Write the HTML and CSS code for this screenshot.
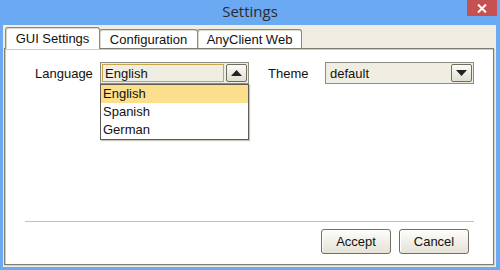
FILE: index.html
```html
<!DOCTYPE html>
<html lang="en">
<head>
  <meta charset="UTF-8" />
  <title>Settings</title>
  <link rel="stylesheet" href="styles.css">
</head>
<body>
  <div class="window">
    <div class="title-bar">
      <span class="title">Settings</span>
      <span class="close-btn">
        <svg width="10" height="9" viewBox="0 0 10 9">
          <path d="M1 0.5 L9 8.5 M9 0.5 L1 8.5" stroke="#fff" stroke-width="2" fill="none"/>
        </svg>
      </span>
    </div>

    <div class="client">
      <div class="tabs">
        <div class="tab active">GUI Settings</div>
        <div class="tab">Configuration</div>
        <div class="tab">AnyClient Web</div>
      </div>

      <div class="panel">
        <div class="form-row">
          <label class="field-label">Language</label>
          <div class="combo-wrap">
            <div class="combo">
              <div class="combo-text focused">English</div>
              <div class="combo-arrow">
                <svg width="11" height="6" viewBox="0 0 11 6"><path d="M0 6 L5.5 0 L11 6 Z" fill="#222"/></svg>
              </div>
            </div>
            <ul class="dropdown">
              <li class="selected">English</li>
              <li>Spanish</li>
              <li>German</li>
            </ul>
          </div>

          <label class="field-label theme-label">Theme</label>
          <div class="combo">
            <div class="combo-text">default</div>
            <div class="combo-arrow">
              <svg width="11" height="6" viewBox="0 0 11 6"><path d="M0 0 L5.5 6 L11 0 Z" fill="#222"/></svg>
            </div>
          </div>
        </div>

        <div class="spacer"></div>
        <hr class="separator">

        <div class="actions">
          <button class="btn">Accept</button>
          <button class="btn">Cancel</button>
        </div>
      </div>
    </div>
  </div>
</body>
</html>
```

FILE: styles.css
```css
body {
  margin: 0;
  font-family: "Liberation Sans", Arial, sans-serif;
  font-size: 13px;
  color: #111;
}

.window {
  width: 500px;
  height: 270px;
  background-color: #6ba9f2;
  display: flex;
  flex-direction: column;
}

.title-bar {
  height: 25px;
  position: relative;
  display: flex;
  justify-content: center;
  align-items: center;
}

.title {
  font-family: "Open Sans", "DejaVu Sans", sans-serif;
  font-size: 15px;
  color: #2b2b2b;
  margin-top: -3px;
}

.close-btn {
  position: absolute;
  top: 0;
  right: 3px;
  width: 30px;
  height: 16px;
  background-color: #c75050;
  display: flex;
  justify-content: center;
  align-items: center;
}

.client {
  flex: 1;
  margin: 0 4px 3px 3px;
  background-color: #f0eee3;
  padding: 2px 2px 2px 1px;
  display: flex;
  flex-direction: column;
}

.tabs {
  display: flex;
  align-items: flex-end;
  padding-left: 1px;
  height: 21px;
  position: relative;
  z-index: 1;
}

.tab {
  height: 19px;
  padding: 1px 0 0 0;
  border: 1px solid #8b8a7e;
  border-bottom: none;
  border-radius: 3px 3px 0 0;
  background-color: #fff;
  box-shadow: inset 1px 1px 0 #dcdacd;
  display: flex;
  align-items: center;
  justify-content: center;
  margin-right: -1px;
  box-sizing: border-box;
  white-space: nowrap;
}

.tab:nth-child(2) {
  width: 99px;
}

.tab:nth-child(3) {
  width: 105px;
}

.tab.active {
  height: 22px;
  width: 95px;
  margin-bottom: -1px;
  padding-bottom: 2px;
}

.panel {
  flex: 1;
  background-color: #fff;
  border: 1px solid #7f7d71;
  box-shadow: inset 1px 1px 0 #cfcdbf, 1px 1px 0 #d6d4c6;
  display: flex;
  flex-direction: column;
  padding: 13px 0 10px 0;
}

.form-row {
  display: flex;
  align-items: center;
  padding-left: 30px;
}

.field-label {
  width: 65px;
}

.theme-label {
  margin-left: 19px;
  width: 57px;
}

.combo-wrap {
  position: relative;
}

.combo {
  width: 149px;
  height: 22px;
  box-sizing: border-box;
  border: 1px solid #8e8c7f;
  background-color: #f0eee3;
  display: flex;
  padding: 1px;
}

.combo-text {
  flex: 1;
  display: flex;
  align-items: center;
  padding-left: 2px;
  border: 1px solid transparent;
}

.combo-text.focused {
  border-color: #caa548;
}

.combo-arrow {
  width: 19px;
  margin-left: 2px;
  border: 1px solid #6f6d61;
  border-radius: 2px;
  background: linear-gradient(#fbfaf6, #e2dfd2);
  display: flex;
  justify-content: center;
  align-items: center;
}

.dropdown {
  position: absolute;
  top: 22px;
  left: 0;
  width: 149px;
  box-sizing: border-box;
  margin: 0;
  padding: 0;
  list-style: none;
  background-color: #fff;
  border: 1px solid #5e5d55;
  box-shadow: 1px 1px 1px #c8c6b8;
}

.dropdown li {
  height: 18px;
  line-height: 18px;
  padding-left: 2px;
}

.dropdown li.selected {
  background-color: #fbdf8d;
}

.spacer {
  flex: 1;
}

.separator {
  border: none;
  border-top: 1px solid #c2c2c2;
  margin: 0 19px 7px 20px;
}

.actions {
  display: flex;
  justify-content: flex-end;
  gap: 8px;
  padding-right: 24px;
}

.btn {
  width: 70px;
  height: 25px;
  font-family: "Liberation Sans", Arial, sans-serif;
  font-size: 13px;
  color: #111;
  border: 1px solid #716f63;
  border-radius: 3px;
  background: linear-gradient(#fdfdfb, #e5e2d5);
  box-shadow: inset 1px 1px 0 #fff;
}
```
